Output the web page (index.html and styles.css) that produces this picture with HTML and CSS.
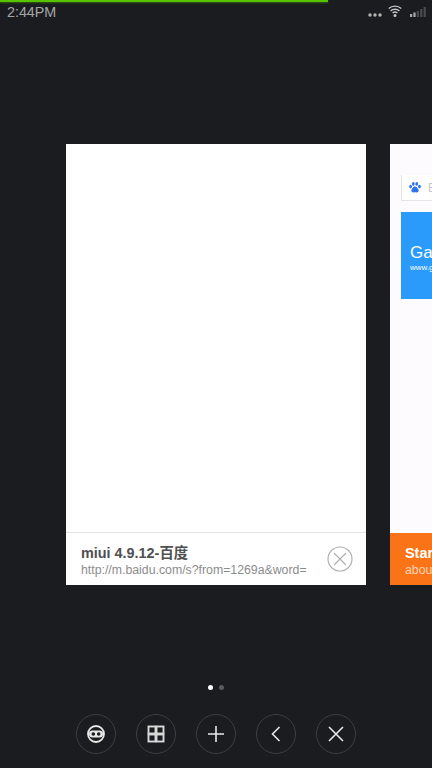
FILE: index.html
```html
<!DOCTYPE html>
<html lang="en">
<head>
    <meta charset="UTF-8">
    <meta name="viewport" content="width=device-width, initial-scale=1.0">
    <title>Tabs</title>
    <link rel="stylesheet" href="styles.css">
</head>
<body>
    <div class="progress"></div>
    <div class="status-bar">
        <span class="time">2:44PM</span>
        <div class="status-icons">
            <svg class="icon-more" width="14" height="4" viewBox="0 0 14 4"><circle cx="2" cy="2" r="1.7"/><circle cx="7" cy="2" r="1.7"/><circle cx="12" cy="2" r="1.7"/></svg>
            <svg class="icon-wifi" width="14" height="12" viewBox="0 0 14 12"><path d="M.7 3.6C4.2 .3 9.8 .3 13.3 3.6M2.6 5.9C5.1 3.7 8.9 3.7 11.4 5.9M4.6 8C6 6.9 8 6.9 9.4 8"/><circle cx="7" cy="10.4" r="1.5"/></svg>
            <svg class="icon-signal" width="16" height="10" viewBox="0 0 16 10"><rect class="on" x="0" y="7" width="2.2" height="3"/><rect class="on" x="3.4" y="5.5" width="2.2" height="4.5"/><rect x="6.8" y="4" width="2.2" height="6"/><rect x="10.2" y="2" width="2.2" height="8"/><rect x="13.6" y="0" width="2.2" height="10"/></svg>
        </div>
    </div>

    <div class="cards">
        <div class="card">
            <div class="card-page"></div>
            <div class="card-footer">
                <div class="card-text">
                    <div class="card-title">miui 4.9.12-百度</div>
                    <div class="card-url">http://m.baidu.com/s?from=1269a&amp;word=</div>
                </div>
                <svg class="card-close" width="26" height="26" viewBox="0 0 26 26"><circle cx="13" cy="13" r="12"/><path d="M7 7L19 19M19 7L7 19"/></svg>
            </div>
        </div>

        <div class="card card-next">
            <div class="card-page">
                <div class="search-box">
                    <svg class="paw" width="12" height="11" viewBox="0 0 12 11"><ellipse cx="1.6" cy="4.6" rx="1.4" ry="1.8"/><ellipse cx="4.3" cy="1.9" rx="1.4" ry="1.8"/><ellipse cx="7.7" cy="1.9" rx="1.4" ry="1.8"/><ellipse cx="10.4" cy="4.6" rx="1.4" ry="1.8"/><path d="M6 4.6C4.4 4.6 2.8 6.8 2.4 8.1 2 9.8 3.5 10.8 4.6 10.5 5.4 10.3 6.6 10.3 7.4 10.5 8.6 10.8 10 9.7 9.6 8.1 9.2 6.8 7.6 4.6 6 4.6Z"/></svg>
                    <span class="search-text">Baidu</span>
                </div>
                <div class="banner">
                    <div class="banner-title">Games</div>
                    <div class="banner-url">www.games.com</div>
                </div>
            </div>
            <div class="card-footer card-footer-orange">
                <div class="card-text">
                    <div class="card-title">Start</div>
                    <div class="card-url">about:start</div>
                </div>
            </div>
        </div>
    </div>

    <div class="dots">
        <span class="dot dot-active"></span>
        <span class="dot"></span>
    </div>

    <div class="toolbar">
        <button class="tool-btn">
            <svg width="20" height="20" viewBox="0 0 20 20"><circle class="thick" cx="10" cy="10" r="8"/><rect class="fill" x="3" y="6.5" width="14" height="7" rx="3.5"/><circle class="hole" cx="7.3" cy="10" r="1.8"/><circle class="hole" cx="12.7" cy="10" r="1.8"/></svg>
        </button>
        <button class="tool-btn">
            <svg class="grid-icon" width="20" height="20" viewBox="0 0 20 20"><rect x="2.5" y="2.5" width="7" height="7"/><rect x="10.5" y="2.5" width="7" height="7"/><rect x="2.5" y="10.5" width="7" height="7"/><rect x="10.5" y="10.5" width="7" height="7"/></svg>
        </button>
        <button class="tool-btn">
            <svg width="20" height="20" viewBox="0 0 20 20"><path d="M10 2V18M2 10H18"/></svg>
        </button>
        <button class="tool-btn">
            <svg width="20" height="20" viewBox="0 0 20 20"><path d="M13.5 3L6.5 10L13.5 17"/></svg>
        </button>
        <button class="tool-btn">
            <svg width="20" height="20" viewBox="0 0 20 20"><path d="M3 3L17 17M17 3L3 17"/></svg>
        </button>
    </div>
</body>
</html>
```

FILE: styles.css
```css
body {
    margin: 0;
    width: 432px;
    height: 768px;
    overflow: hidden;
    background-color: #1b1c20;
    font-family: "Liberation Sans", "Noto Sans CJK SC", sans-serif;
    display: flex;
    flex-direction: column;
}
.progress {
    width: 328px;
    height: 2px;
    flex: none;
    background-color: #58c400;
    box-shadow: 0 1px 2px rgba(88, 196, 0, 0.4);
}
.status-bar {
    height: 20px;
    flex: none;
    display: flex;
    justify-content: space-between;
    align-items: center;
    padding: 0 6px 0 7px;
}
.time {
    font-size: 14.3px;
    color: #a6a6a6;
}
.status-icons {
    display: flex;
    align-items: flex-end;
    gap: 6px;
    padding-bottom: 2px;
}
.status-icons svg {
    display: block;
}
.icon-more {
    fill: #b4b4b4;
}
.icon-wifi {
    fill: #c4c4c4;
}
.icon-wifi path {
    fill: none;
    stroke: #c4c4c4;
    stroke-width: 1.4;
}
.icon-signal {
    margin-left: 2px;
    fill: #4a4b4e;
}
.icon-signal .on {
    fill: #a8a8a8;
}
.cards {
    flex: none;
    display: flex;
    gap: 24px;
    height: 441px;
    margin-top: 122px;
    padding-left: 66px;
}
.card {
    width: 300px;
    flex: none;
    display: flex;
    flex-direction: column;
    background-color: #fff;
}
.card-page {
    flex: 1;
    border-bottom: 1px solid #e3e3e3;
}
.card-footer {
    height: 52px;
    flex: none;
    display: flex;
    align-items: center;
    justify-content: space-between;
    padding: 0 13px 0 15px;
}
.card-text {
    padding-top: 3px;
}
.card-title {
    font-size: 14.4px;
    font-weight: bold;
    line-height: 18px;
    color: #505050;
}
.card-url {
    font-size: 12.3px;
    line-height: 16px;
    color: #8c8c8c;
}
.card-close {
    fill: none;
    stroke: #b0b0b0;
    stroke-width: 1.2;
}
.card-next .card-page {
    background-color: #fdfbfe;
    border-bottom: none;
    padding: 31px 0 0 11px;
}
.search-box {
    height: 25px;
    display: flex;
    align-items: center;
    gap: 7px;
    padding-left: 7px;
    border: 1px solid #e4e4e4;
    border-width: 0 0 1px 1px;
    background-color: #fff;
}
.paw {
    fill: #2f74e8;
}
.search-text {
    font-size: 12px;
    color: #c8c8c8;
}
.banner {
    height: 87px;
    margin-top: 11px;
    padding-left: 9px;
    background-color: #2b9bfb;
    color: #fff;
    overflow: hidden;
    box-sizing: border-box;
    padding-top: 31px;
}
.banner-title {
    font-size: 17px;
    line-height: 20px;
}
.banner-url {
    font-size: 8px;
    line-height: 10px;
}
.card-footer-orange {
    background-color: #fb7317;
}
.card-footer-orange .card-title {
    color: #fff;
}
.card-footer-orange .card-url {
    color: #fdd3b5;
}
.dots {
    flex: none;
    display: flex;
    justify-content: center;
    gap: 6px;
    margin-top: 100px;
    padding-right: 1px;
}
.dot {
    width: 5px;
    height: 5px;
    border-radius: 50%;
    background-color: #5a5b5e;
}
.dot-active {
    background-color: #fff;
}
.toolbar {
    flex: none;
    display: flex;
    justify-content: center;
    gap: 20px;
    margin-top: 24px;
}
.tool-btn {
    width: 40px;
    height: 40px;
    padding: 0;
    display: flex;
    align-items: center;
    justify-content: center;
    background: none;
    border: 1px solid #3d3e42;
    border-radius: 50%;
}
.tool-btn svg {
    fill: none;
    stroke: #e8e8e8;
    stroke-width: 1.6;
}
.tool-btn .grid-icon {
    stroke: #d8d8d8;
    stroke-width: 1.9;
}
.tool-btn .fill {
    fill: #e8e8e8;
    stroke: none;
}
.tool-btn .thick {
    stroke-width: 1.8;
}
.tool-btn .hole {
    fill: #1b1c20;
    stroke: none;
}
```
